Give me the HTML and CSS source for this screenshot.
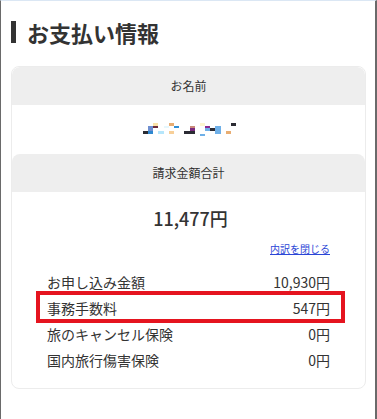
FILE: index.html
```html
<!DOCTYPE html>
<html lang="ja">
<head>
<meta charset="utf-8">
<title>お支払い情報</title>
<link rel="stylesheet" href="styles.css">
</head>
<body>
<div class="modal">
  <h2 class="title">お支払い情報</h2>
  <div class="card">
    <div class="sec-head">お名前</div>
    <div class="name-body">
      <svg class="mosaic" width="95" height="14" viewBox="145 122 95 14" aria-label="氏名">
        <rect x="155" y="123" width="5" height="3" fill="#fbe3a8"/>
        <rect x="155" y="126" width="5" height="2" fill="#6b2a3a"/>
        <rect x="150" y="126" width="5" height="5" fill="#6f8fd0"/>
        <rect x="150" y="131" width="5" height="3" fill="#2e88d0"/>
        <rect x="145" y="131" width="5" height="3" fill="#2b2b33"/>
        <rect x="160" y="131" width="6" height="3" fill="#b6e6fb"/>
        <rect x="166" y="126" width="5" height="2" fill="#e6f7fd"/>
        <rect x="171" y="123" width="5" height="3" fill="#e8ad72"/>
        <rect x="176" y="126" width="5" height="2" fill="#2e8ed6"/>
        <rect x="171" y="131" width="5" height="3" fill="#f7cf98"/>
        <rect x="192" y="126" width="5" height="2" fill="#c98a7a"/>
        <rect x="192" y="128" width="5" height="3" fill="#7a2a80"/>
        <rect x="186" y="131" width="11" height="3" fill="#2b2b33"/>
        <rect x="202" y="123" width="5" height="3" fill="#fdf6cf"/>
        <rect x="207" y="126" width="5" height="2" fill="#8a2a90"/>
        <rect x="207" y="128" width="5" height="3" fill="#6fb0e8"/>
        <rect x="212" y="128" width="5" height="3" fill="#2b2b33"/>
        <rect x="202" y="134" width="5" height="2" fill="#6fb0e8"/>
        <rect x="217" y="126" width="6" height="8" fill="#6fb0e8"/>
        <rect x="233" y="123" width="5" height="3" fill="#2b2b33"/>
        <rect x="228" y="131" width="5" height="3" fill="#e8ad72"/>
      </svg>
    </div>
    <div class="sec-head">請求金額合計</div>
    <div class="total-body">
      <div class="total">11,477円</div>
      <div class="toggle"><a href="#">内訳を閉じる</a></div>
      <ul class="rows">
        <li class="row"><span>お申し込み金額</span><span>10,930円</span></li>
        <li class="row row-marked"><span>事務手数料</span><span>547円</span></li>
        <li class="row"><span>旅のキャンセル保険</span><span>0円</span></li>
        <li class="row"><span>国内旅行傷害保険</span><span>0円</span></li>
      </ul>
    </div>
  </div>
</div>
</body>
</html>
```
FILE: styles.css
```css
html, body {
  margin: 0;
  padding: 0;
  background: #ffffff;
}
body {
  font-family: "Noto Sans CJK JP", "Noto Sans", sans-serif;
  color: #333333;
}
.modal {
  box-sizing: border-box;
  width: 377px;
  height: 419px;
  border-top: 1px solid #dbe7f4;
  border-left: 1px solid #6a6a6a;
  border-right: 2px solid #6a6a6a;
  padding: 0 9px 0 10px;
  overflow: hidden;
}
.title {
  margin: 20px 0 0 0;
  border-left: 5px solid #333333;
  padding-left: 11px;
  font-size: 22px;
  line-height: 22px;
  font-weight: 700;
  color: #333333;
}
.card {
  margin-top: 23px;
  border: 1px solid #ececec;
  border-radius: 8px;
  overflow: hidden;
}
.sec-head {
  background: #eeeeee;
  height: 38px;
  line-height: 38px;
  text-align: center;
  font-size: 12px;
  border-radius: 8px 8px 0 0;
}
.name-body {
  height: 49px;
  display: flex;
  justify-content: center;
  align-items: flex-start;
  padding-left: 4px;
}
.mosaic {
  display: block;
  margin-top: 17px;
}
.total-body {
  padding: 14px 35px 15px 35px;
}
.total {
  text-align: center;
  font-size: 18px;
  line-height: 24px;
  font-weight: 500;
  padding-left: 4px;
}
.toggle {
  margin-top: 11px;
  text-align: right;
  font-size: 10px;
  line-height: 16px;
}
.toggle a {
  color: #2b46d6;
  text-decoration: underline;
}
.rows {
  list-style: none;
  margin: 12px 0 0 0;
  padding: 0;
}
.row {
  display: flex;
  justify-content: space-between;
  font-size: 14px;
  line-height: 26px;
}
.row-marked {
  position: relative;
}
.row-marked::after {
  content: "";
  position: absolute;
  left: -11px;
  right: -15px;
  top: -4px;
  bottom: -2px;
  border: 4px solid #e5141f;
}
```
